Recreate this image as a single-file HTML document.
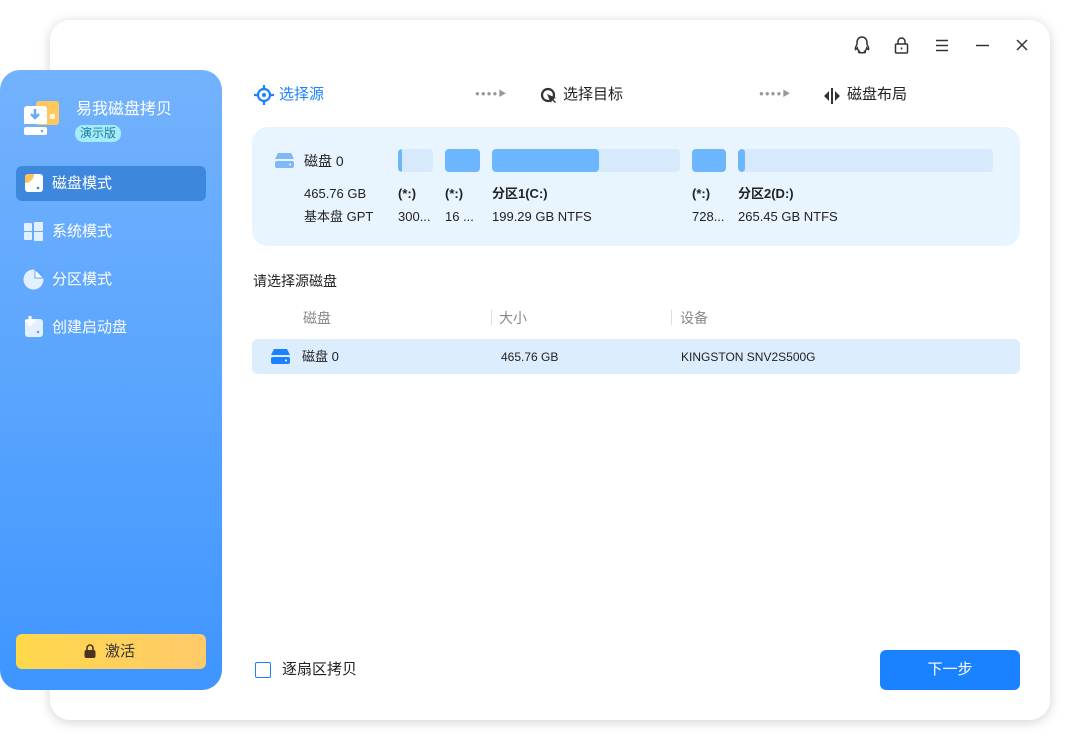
<!DOCTYPE html>
<html><head><meta charset="utf-8"><style>
*{margin:0;padding:0;box-sizing:border-box}
body{width:1070px;height:740px;background:#fff;position:relative;overflow:hidden;font-family:"Liberation Sans","Noto Sans CJK SC",sans-serif;color:#222}
.win{position:absolute;left:50px;top:20px;width:1000px;height:700px;background:#fff;border-radius:20px;box-shadow:0 2px 12px rgba(0,0,0,.18)}
.side{position:absolute;left:0;top:70px;width:222px;height:620px;border-radius:20px;background:linear-gradient(180deg,#73b2fd 0%,#5aa5fe 50%,#3e95ff 100%)}
.abs{position:absolute}
.t{position:absolute;white-space:nowrap;line-height:1.3}
.nav{position:absolute;left:16px;width:190px;height:35px;border-radius:6px;color:#fff;font-size:15px}
.nav span{position:absolute;left:36px;top:8px;line-height:1.3}
.bar{position:absolute;top:149px;height:23px;border-radius:4px;background:#d6eafc;overflow:hidden}
.bar i{position:absolute;left:0;top:0;bottom:0;background:#6cb6ff;border-radius:4px}
.s13{font-size:13px;color:#222}
</style></head><body>
<div class="win"></div>
<svg class="abs" style="left:850px;top:34px" width="185" height="24" viewBox="0 0 185 24" fill="none" stroke="#333" stroke-width="1.5">
<path d="M12 3c-3 0-5 2.5-5 5.5v2c-1 1.5-2 3-1.5 5 1-.5 1.5-1 1.8-1.5.3 1.5 1 2.5 2 3.2-1 .5-1 1.5.5 1.5h4.4c1.5 0 1.5-1 .5-1.5 1-.7 1.700-1.7 2-3.2.3.5.8 1 1.8 1.5.5-2-.5-3.5-1.5-5v-2C17 5.5 15 3 12 3z"/>
<rect x="45.5" y="10" width="12" height="9" rx="1"/><path d="M48 10V7.5a3.5 3.5 0 0 1 7 0V10M51.5 13.5v2"/>
<path d="M86 6.5h12M86 11.5h12M86 16.5h12"/>
<path d="M126 11.5h13"/>
<path d="M167 6l10 10M177 6l-10 10"/>
</svg>
<div class="side"></div>
<svg class="abs" style="left:22px;top:100px" width="38" height="38" viewBox="0 0 38 38">
<rect x="14" y="1" width="23" height="24" rx="3" fill="#ffc760"/>
<rect x="28" y="14" width="5" height="5" fill="#fff" opacity=".8"/>
<path d="M2 9a3 3 0 0 1 3-3h17a3 3 0 0 1 3 3v15H2z" fill="#fff"/>
<path d="M13 9v9M9 14l4 4 4-4" stroke="#6aaaf5" stroke-width="2.5" fill="none"/>
<rect x="2" y="27" width="23" height="8" rx="2" fill="#fff"/><circle cx="20" cy="31" r="1.3" fill="#6aaaf5"/>
</svg>
<div class="t" style="left:76px;top:100px;color:#fff;font-size:16px">易我磁盘拷贝</div>
<div class="t" style="left:75px;top:125px;background:#a5ebfb;color:#1c7fa0;font-size:12px;border-radius:8px;padding:0 5px;line-height:17px">演示版</div>
<div class="nav" style="top:166px;background:#3d87dc"><svg class="abs" style="left:8px;top:7px" width="20" height="20" viewBox="0 0 20 20"><rect x="1" y="1" width="18" height="18" rx="3" fill="#fff"/><path d="M1 10V4a3 3 0 0 1 3-3h6a9 9 0 0 1-9 9z" fill="#ffc05a"/><circle cx="14" cy="15" r="1.3" fill="#3d87dc"/></svg><span>磁盘模式</span></div>
<div class="nav" style="top:214px"><svg class="abs" style="left:8px;top:8px" width="19" height="19" viewBox="0 0 19 19" fill="#e3f0ff"><rect x="0" y="1" width="8" height="8" rx="1"/><rect x="10" y="0" width="9" height="9" rx="1"/><rect x="0" y="10" width="8" height="8" rx="1"/><rect x="10" y="10" width="9" height="9" rx="1"/></svg><span>系统模式</span></div>
<div class="nav" style="top:262px"><svg class="abs" style="left:7px;top:7px" width="21" height="21" viewBox="0 0 21 21"><circle cx="10.5" cy="10.5" r="10" fill="#e3f0ff"/><path d="M11.5 0.5v9h9a9 9 0 0 0-9-9z" fill="#5aa5fe"/><path d="M12.5 1.5v7h7" fill="#fff"/></svg><span>分区模式</span></div>
<div class="nav" style="top:310px"><svg class="abs" style="left:8px;top:6px" width="20" height="21" viewBox="0 0 20 21"><rect x="1" y="3" width="18" height="18" rx="3" fill="#e3f0ff"/><path d="M6 0v10M1 5h10" stroke="#fff" stroke-width="3"/><circle cx="14" cy="16" r="1.3" fill="#5aa5fe"/></svg><span>创建启动盘</span></div>
<div class="abs" style="left:16px;top:634px;width:190px;height:35px;border-radius:6px;background:linear-gradient(90deg,#ffd84a,#ffca6a);font-size:15px;color:#333"><svg class="abs" style="left:68px;top:10px" width="12" height="14" viewBox="0 0 12 14"><path d="M3 6V4a3 3 0 0 1 6 0v2" stroke="#4a3320" stroke-width="1.6" fill="none"/><rect x="0.5" y="6" width="11" height="8" rx="2" fill="#4a3320"/></svg><span class="t" style="left:89px;top:8px">激活</span></div>
<svg class="abs" style="left:254px;top:85px" width="20" height="20" viewBox="0 0 20 20" stroke="#1a82ff" stroke-width="2.2" fill="none"><circle cx="10" cy="10" r="6"/><circle cx="10" cy="10" r="2" fill="#1a82ff" stroke="none"/><path d="M10 0v4M10 16v4M0 10h4M16 10h4"/></svg>
<div class="t" style="left:279px;top:85px;font-size:15px;color:#1a82ff">选择源</div>
<div class="t" style="left:475px;top:89px;font-size:8px;color:#999;letter-spacing:1px">●●●●▶</div>
<svg class="abs" style="left:540px;top:87px" width="18" height="18" viewBox="0 0 18 18"><circle cx="8" cy="8" r="6" stroke="#333" stroke-width="2.2" fill="none"/><path d="M7 7l9 4-3 1 3 3-1 1-3-3-1 3z" fill="#333"/></svg>
<div class="t" style="left:563px;top:85px;font-size:15px">选择目标</div>
<div class="t" style="left:759px;top:89px;font-size:8px;color:#999;letter-spacing:1px">●●●●▶</div>
<svg class="abs" style="left:823px;top:88px" width="18" height="16" viewBox="0 0 18 16" fill="#333"><rect x="8" y="0" width="2" height="16"/><path d="M6 3v10L1 8zM12 3v10l5-5z"/></svg>
<div class="t" style="left:847px;top:85px;font-size:15px">磁盘布局</div>
<div class="abs" style="left:252px;top:127px;width:768px;height:119px;border-radius:16px;background:#e8f4fe"></div>
<svg class="abs" style="left:275px;top:153px" width="19" height="15" viewBox="0 0 19 15" fill="#7fb7f7"><path d="M3 0h13l3 6H0z"/><rect x="0" y="8" width="19" height="7" rx="2"/><circle cx="15" cy="11.5" r="1" fill="#fff"/></svg>
<div class="t" style="left:304px;top:152px;font-size:14px">磁盘 0</div>
<div class="bar" style="left:398px;width:35px"><i style="width:4px"></i></div>
<div class="bar" style="left:445px;width:35px;background:#6cb6ff"></div>
<div class="bar" style="left:492px;width:188px"><i style="width:107px"></i></div>
<div class="bar" style="left:692px;width:34px;background:#6cb6ff"></div>
<div class="bar" style="left:738px;width:255px"><i style="width:7px"></i></div>
<div class="t s13" style="left:304px;top:186px">465.76 GB</div>
<div class="t s13" style="left:304px;top:209px">基本盘 GPT</div>
<div class="t s13" style="left:398px;top:186px;font-weight:bold">(*:)</div>
<div class="t s13" style="left:398px;top:209px">300...</div>
<div class="t s13" style="left:445px;top:186px;font-weight:bold">(*:)</div>
<div class="t s13" style="left:445px;top:209px">16 ...</div>
<div class="t s13" style="left:492px;top:186px;font-weight:bold">分区1(C:)</div>
<div class="t s13" style="left:492px;top:209px">199.29 GB NTFS</div>
<div class="t s13" style="left:692px;top:186px;font-weight:bold">(*:)</div>
<div class="t s13" style="left:692px;top:209px">728...</div>
<div class="t s13" style="left:738px;top:186px;font-weight:bold">分区2(D:)</div>
<div class="t s13" style="left:738px;top:209px">265.45 GB NTFS</div>
<div class="t" style="left:253px;top:272px;font-size:14px">请选择源磁盘</div>
<div class="t" style="left:303px;top:309px;font-size:14px;color:#888">磁盘</div>
<div class="abs" style="left:491px;top:310px;width:1px;height:15px;background:#ddd"></div>
<div class="t" style="left:499px;top:309px;font-size:14px;color:#888">大小</div>
<div class="abs" style="left:671px;top:310px;width:1px;height:15px;background:#ddd"></div>
<div class="t" style="left:680px;top:309px;font-size:14px;color:#888">设备</div>
<div class="abs" style="left:252px;top:339px;width:768px;height:35px;border-radius:6px;background:#dcedfd"></div>
<svg class="abs" style="left:271px;top:349px" width="19" height="15" viewBox="0 0 19 15" fill="#1a82ff"><path d="M3 0h13l3 6H0z"/><rect x="0" y="8" width="19" height="7" rx="2"/><circle cx="15" cy="11.5" r="1" fill="#fff"/></svg>
<div class="t" style="left:302px;top:349px;font-size:13px">磁盘 0</div>
<div class="t" style="left:501px;top:350px;font-size:12px">465.76 GB</div>
<div class="t" style="left:681px;top:350px;font-size:12px">KINGSTON SNV2S500G</div>
<div class="abs" style="left:255px;top:662px;width:16px;height:16px;border:1.5px solid #1a82ff;border-radius:2px"></div>
<div class="t" style="left:282px;top:660px;font-size:15px">逐扇区拷贝</div>
<div class="abs" style="left:880px;top:650px;width:140px;height:40px;border-radius:6px;background:#1a82ff;color:#fff;font-size:15px;text-align:center;line-height:40px">下一步</div>
</body></html>
